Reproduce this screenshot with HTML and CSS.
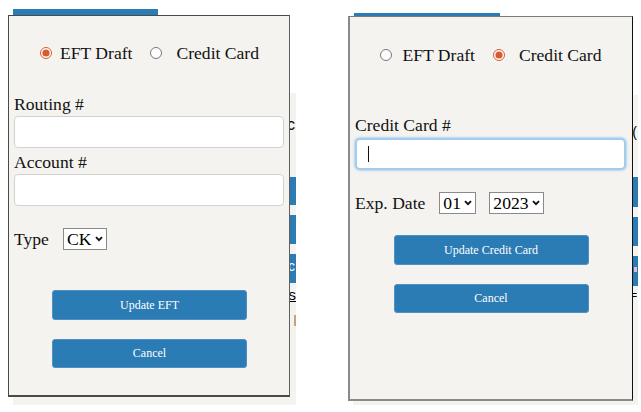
FILE: index.html
```html
<!DOCTYPE html>
<html>
<head>
<meta charset="utf-8">
<link rel="stylesheet" href="styles.css">
</head>
<body>
<div class="stage">
  <section class="scene scene-eft">
    <div class="page page-eft">
      <div class="tab-bar tab-eft"></div>
      <div class="panel panel-eft">
        <div class="frag-text">Abc</div>
        <div class="frag-bar bar-1"></div>
        <div class="frag-bar bar-2"></div>
        <div class="frag-bar bar-3"><span>Calc</span></div>
        <div class="frag-link">Status</div>
        <div class="frag-tan"></div>
      </div>
    </div>
    <div class="dialog dialog-eft">
      <div class="radios">
        <input type="radio" name="m1" class="radio r-first" checked><span class="rlabel gap-a">EFT Draft</span>
        <input type="radio" name="m1" class="radio r-second"><span class="rlabel">Credit Card</span>
      </div>
      <div class="label l-routing">Routing #</div>
      <input type="text" class="field f-first">
      <div class="label l-account">Account #</div>
      <input type="text" class="field f-second">
      <div class="select-row row-type">
        <span class="label-inline">Type</span>
        <span class="sel-wrap">
          <select class="sel"><option>CK</option></select>
          <svg class="chev" width="8" height="6" viewBox="0 0 8 6"><path d="M1 1.2 L4 4.2 L7 1.2" fill="none" stroke="#111" stroke-width="1.9"/></svg>
        </span>
      </div>
      <button class="btn btn-first">Update EFT</button>
      <button class="btn btn-next">Cancel</button>
    </div>
  </section>

  <section class="scene scene-cc">
    <div class="page page-cc">
      <div class="tab-bar tab-cc"></div>
      <div class="panel panel-cc">
        <div class="frag-text cc-text">Ab(</div>
        <div class="frag-bar cbar-1"></div>
        <div class="frag-bar cbar-2"></div>
        <div class="frag-bar cbar-3"><span class="dot"></span></div>
        <div class="frag-small">- =</div>
      </div>
    </div>
    <div class="dialog dialog-cc">
      <div class="radios radios-cc">
        <input type="radio" name="m2" class="radio r-first"><span class="rlabel gap-b">EFT Draft</span>
        <input type="radio" name="m2" class="radio r-second" checked><span class="rlabel">Credit Card</span>
      </div>
      <div class="label l-card">Credit Card #</div>
      <div class="focus-wrap">
        <input type="text" class="field field-focus">
      </div>
      <div class="select-row row-exp">
        <span class="label-inline">Exp. Date</span>
        <span class="sel-wrap">
          <select class="sel"><option>01</option></select>
          <svg class="chev" width="8" height="6" viewBox="0 0 8 6"><path d="M1 1.2 L4 4.2 L7 1.2" fill="none" stroke="#111" stroke-width="1.9"/></svg>
        </span>
        <span class="sel-wrap sel-year">
          <select class="sel"><option>2023</option></select>
          <svg class="chev" width="8" height="6" viewBox="0 0 8 6"><path d="M1 1.2 L4 4.2 L7 1.2" fill="none" stroke="#111" stroke-width="1.9"/></svg>
        </span>
      </div>
      <button class="btn btn-cc-first">Update Credit Card</button>
      <button class="btn btn-next">Cancel</button>
    </div>
  </section>
</div>
</body>
</html>
```

FILE: styles.css
```css
* { box-sizing: border-box; }
html, body { margin: 0; padding: 0; background: #ffffff; }
body { font-family: "Liberation Serif", "Times New Roman", serif; color: #111; }

.stage { display: flex; width: 641px; height: 412px; overflow: hidden; }
.scene { position: relative; height: 412px; flex: none; }
.scene-eft { width: 320px; }
.scene-cc { width: 321px; }

/* underlying page */
.page { display: flex; flex-direction: column; }
.page-eft { padding-left: 13px; }
.page-cc { padding-left: 33px; }
.tab-bar { background: #2b7bb4; height: 8px; }
.tab-eft { width: 145px; margin-top: 9px; }
.tab-cc { width: 146px; margin-top: 13px; margin-left: 1px; }

.panel {
  background: #f4f3ef;
  overflow: hidden;
  display: flex;
  flex-direction: column;
  align-items: stretch;
}
.panel-eft { width: 283px; height: 312px; margin-top: 76px; padding-top: 23px; }
.panel-cc { width: 285px; height: 310px; margin-top: 74px; padding-top: 24px; }

.frag-text { text-align: right; font-family: "Liberation Sans", Arial, sans-serif; font-size: 16px; line-height: 18px; height: 18px; color: #000; padding-right: 1px; }
.frag-bar { background: #2b7bb4; position: relative; text-align: right; color: #fff; font-family: "Liberation Sans", Arial, sans-serif; font-size: 14px; }
.bar-1 { height: 28px; margin-top: 43px; }
.bar-2 { height: 29px; margin-top: 10px; }
.bar-3 { height: 29px; margin-top: 10px; padding-top: 4px; padding-right: 1px; }
.frag-link { margin-top: 5px; height: 15px; font-family: "Liberation Sans", Arial, sans-serif; font-size: 15px; line-height: 14px; text-align: right; text-decoration: underline; color: #000; }
.frag-tan { align-self: flex-end; width: 2px; height: 11px; margin-top: 12px; background: #c9a273; }

.cc-text { font-size: 14px; margin-top: 4px; }
.cbar-1 { height: 30px; margin-top: 36px; }
.cbar-2 { height: 29px; margin-top: 10px; }
.cbar-3 { height: 30px; margin-top: 10px; }
.cbar-3 .dot { position: absolute; right: 1px; top: 11px; width: 3px; height: 5px; background: #e6b7d6; }
.frag-small { text-align: right; font-family: "Liberation Sans", Arial, sans-serif; font-size: 10px; line-height: 10px; margin-top: 5px; color: #000; padding-right: 1px; }

/* dialog */
.dialog {
  position: absolute;
  background: #f4f3ef;
  display: flex;
  flex-direction: column;
  align-items: flex-start;
  font-family: "Liberation Serif", "Times New Roman", serif;
  font-size: 17.6px;
}
.dialog-eft {
  left: 8px; top: 15px; width: 282px; height: 382px;
  border-top: 1px solid #4a4a4a;
  border-left: 1px solid #4a4a4a;
  border-right: 1px solid #5e5e5e;
  border-bottom: 2px solid #4a4a4a;
  padding: 0 4px 0 5px;
}
.dialog-cc {
  left: 28px; top: 16px; width: 285px; height: 385px;
  border-top: 1px solid #7a7a7a;
  border-left: 2px solid #8a8a8a;
  border-right: 1px solid #111;
  border-bottom: 2px solid #8a8a8a;
  padding: 0 5px 0 5px;
}

.radios {
  align-self: stretch;
  display: flex;
  align-items: center;
  justify-content: center;
  height: 20px;
  margin-top: 27px;
  line-height: 20px;
}
.radios-cc { margin-top: 28px; }
.rlabel { font-family: "Liberation Serif", "Times New Roman", serif; }
.radio {
  accent-color: #d75b2c;
  width: 12px; height: 12px;
  margin: 0;
}
.r-first { margin-right: 8px; }
.r-second { margin-right: 14px; }
.rlabel.gap-a { margin-right: 18px; }
.rlabel.gap-b { margin-right: 18px; }
.dialog-cc .r-first { margin-right: 10px; }

.label { line-height: 20px; height: 20px; }
.l-routing { margin-top: 31px; }
.l-account { margin-top: 4px; }
.l-card { margin-top: 50px; }

.field {
  display: block;
  width: 270px; height: 32px;
  background: #fff;
  border: 1px solid #d2d2d2;
  border-radius: 4px;
  margin: 2px 0 0 0;
  font: inherit;
  padding: 0 8px;
}
.focus-wrap { position: relative; margin-top: 3px; }
.field-focus {
  margin: 0;
  width: 271px;
  border: 2px solid #a3cbee;
  box-shadow: 0 0 2px 1px rgba(140, 190, 235, 0.55);
  border-radius: 5px;
  outline: none;
}
.focus-wrap::after {
  content: "";
  position: absolute;
  left: 13px; top: 8px;
  width: 1px; height: 16px;
  background: #111;
}

.select-row { display: flex; align-items: center; height: 22px; }
.row-type { margin-top: 22px; }
.row-exp { margin-top: 22px; height: 22px; }
.label-inline { line-height: 20px; margin-right: 14px; }
.sel-wrap { position: relative; display: inline-flex; }
.sel {
  appearance: none;
  -webkit-appearance: none;
  font-family: "Liberation Serif", "Times New Roman", serif;
  font-size: 17.6px;
  line-height: 20px;
  height: 22px;
  color: #000;
  background: #fff;
  border: 1px solid #8a8a8a;
  border-radius: 0;
  padding: 0 14px 0 3px;
  margin: 0;
}
.chev {
  position: absolute;
  right: 4px;
  top: 8px;
  pointer-events: none;
}
.sel-year { margin-left: 13px; }

.btn {
  align-self: center;
  width: 195px; height: 30px;
  background: #2b7bb4;
  border: 1px solid #4d90c4;
  border-radius: 3px;
  color: #fff;
  font-family: "Liberation Serif", "Times New Roman", serif;
  font-size: 12px;
  padding: 0;
}
.btn-first { margin-top: 40px; }
.btn-cc-first { margin-top: 21px; }
.btn-next { margin-top: 19px; height: 29px; }
```
